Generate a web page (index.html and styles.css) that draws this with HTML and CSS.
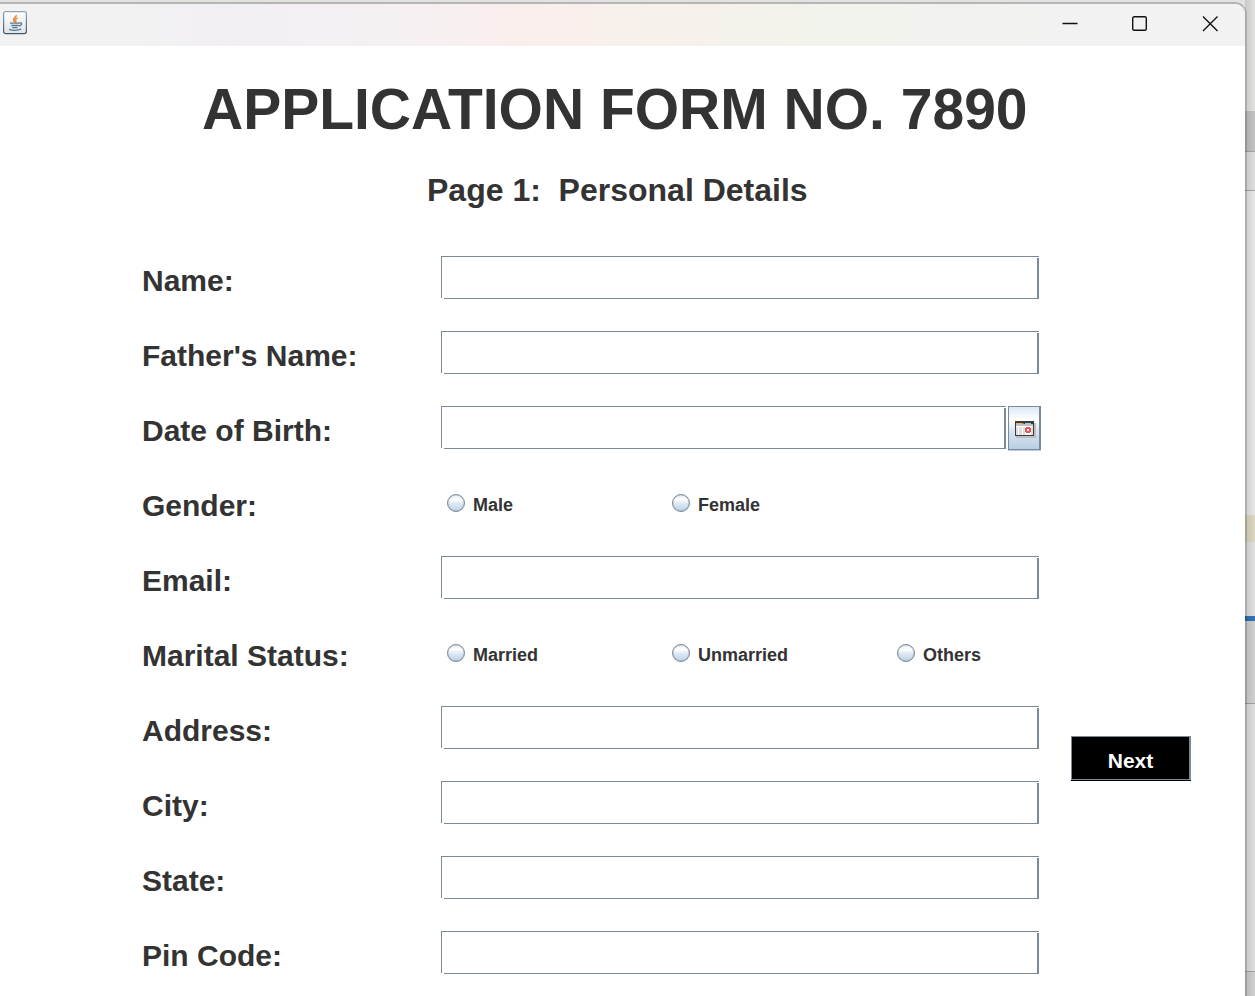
FILE: index.html
```html
<!DOCTYPE html>
<html lang="en">
<head>
<meta charset="utf-8">
<meta name="viewport" content="width=device-width, initial-scale=1">
<title>Application Form</title>
<link rel="stylesheet" href="styles.css">
</head>
<body>
<div class="desktop">
  <div class="window">
    <header class="titlebar">
      <svg class="app-icon" width="24" height="24" viewBox="0 0 24 24" aria-hidden="true">
        <defs><linearGradient id="tile" x1="0" y1="0" x2="0" y2="1"><stop offset="0" stop-color="#fff"/><stop offset="1" stop-color="#dfe3e6"/></linearGradient><linearGradient id="rim" x1="0" y1="0" x2="0" y2="1"><stop offset="0" stop-color="#8fa5b4"/><stop offset="1" stop-color="#3f5b70"/></linearGradient></defs>
        <rect x="0.6" y="0.6" width="22.8" height="22" rx="2" fill="url(#tile)" stroke="url(#rim)" stroke-width="1.2"/>
        <path d="M13.200 4c.6 2.400-3.400 3-2.600 5.200.2.700.9 1.200 1.200 2.200M14.600 7c-2.400.8-2.800 1.800-1.900 2.700.5.500.2 1.100-.4 1.600" fill="none" stroke="#ee8a32" stroke-width="1.500"/>
        <path d="M7 12.100h9.500M8.300 14.500h7.400M9.300 16.600h5.200M16.500 11.900c3.200-.4 2.700 2.400-.6 3.100M6 18.400c3.500 1 9 1 12.300-.2" fill="none" stroke="#58788f" stroke-width="1.300"/>
      </svg>
      <div class="window-controls">
        <button class="control" type="button" aria-label="Minimize"><svg width="16" height="16" viewBox="0 0 16 16"><path d="M0.500 7.500h15"/></svg></button>
        <button class="control" type="button" aria-label="Maximize"><svg width="16" height="16" viewBox="0 0 16 16"><rect x="0.700" y="0.700" width="13.600" height="13.600" rx="1.500"/></svg></button>
        <button class="control" type="button" aria-label="Close"><svg width="16" height="16" viewBox="0 0 16 16"><path d="M1 .5l14.500 14.500M15.500 .5L1 15"/></svg></button>
      </div>
    </header>
    <main class="content">
      <h1 class="title">APPLICATION FORM NO. 7890</h1>
      <h2 class="subtitle">Page 1:&nbsp; Personal Details</h2>
      <form class="form">
        <label class="label" for="name">Name:</label>
        <input class="field" id="name" type="text">
        <label class="label" for="father">Father's Name:</label>
        <input class="field" id="father" type="text">
        <label class="label" for="dob">Date of Birth:</label>
        <div class="date">
          <input class="field" id="dob" type="text">
          <button class="date-button" type="button" aria-label="Choose date">
            <svg width="21" height="17" viewBox="0 0 21 17" shape-rendering="crispEdges">
              <path d="M1 2h20v15H1z" fill="#bdbfc3"/>
              <path d="M0 0h19v15H0z" fill="#3c3c3e"/>
              <path d="M1 3h17v11H1z" fill="#fff"/>
              <path d="M1 3h17v2H1z" fill="#bfbfbf"/>
              <path d="M1 2h6v1H1z" fill="#f5b243"/><path d="M7 2h2v1H7z" fill="#8a7f72"/><path d="M10 2h6v1h-6z" fill="#9cc7ee"/>
              <path d="M1 6h2v8H1zM4 6h3v8H4zM8 6h2v8H8zM16 6h2v8h-2z" fill="#dedede"/>
              <path d="M11 6h4v1h1v4h-1v1h-4v-1h-1V7h1z" fill="#e25558"/><path d="M12 8h2v2h-2z" fill="#fff"/>
            </svg>
          </button>
        </div>
        <span class="label" id="gender-label">Gender:</span>
        <div class="options" role="radiogroup" aria-labelledby="gender-label">
          <label class="option"><input class="radio" type="radio" name="gender">Male</label>
          <label class="option"><input class="radio" type="radio" name="gender">Female</label>
        </div>
        <label class="label" for="email">Email:</label>
        <input class="field" id="email" type="text">
        <span class="label" id="marital-label">Marital Status:</span>
        <div class="options" role="radiogroup" aria-labelledby="marital-label">
          <label class="option"><input class="radio" type="radio" name="marital">Married</label>
          <label class="option"><input class="radio" type="radio" name="marital">Unmarried</label>
          <label class="option"><input class="radio" type="radio" name="marital">Others</label>
        </div>
        <label class="label" for="address">Address:</label>
        <input class="field" id="address" type="text">
        <label class="label" for="city">City:</label>
        <input class="field" id="city" type="text">
        <label class="label" for="state">State:</label>
        <input class="field" id="state" type="text">
        <label class="label" for="pin">Pin Code:</label>
        <input class="field" id="pin" type="text">
        <button class="next" type="button">Next</button>
      </form>
    </main>
  </div>
</div>
</body>
</html>
```
FILE: styles.css
```css
* {
  box-sizing: border-box;
}

body {
  margin: 0;
  background: #dcdcdc;
  color: #333;
  font-family: "Liberation Sans", Arial, sans-serif;
  font-weight: bold;
}

button,
input {
  margin: 0;
  font: inherit;
}

/* The strip of other windows showing behind the right edge */
.desktop {
  min-height: 100vh;
  padding: 2px 8px 0 0;
  background:
    linear-gradient(90deg, #0000001c, #0000) right / 10px 100% no-repeat,
    linear-gradient(#e2e2e1 111px, #c2c2c2 111px 151px, #a6a6a6 151px 152px, #dedede 152px 190px, #a6a6a6 190px 191px, #e6e6e6 191px 515px, #dbd7c1 515px 542px, #e0e0e0 542px 616px, #3474b5 616px 621px, #d0d0d0 621px 703px, #a3a3a3 703px 704px, #dedede 704px 971px, #a3a3a3 971px 972px, #cfcfcf 972px);
}

.window {
  display: flex;
  flex-direction: column;
  min-height: calc(100vh - 2px);
  border-top: 2px solid #00000033;
  border-right: 2px solid #00000028;
  border-top-right-radius: 12px;
  background: #fff;
  background-clip: padding-box;
  overflow: hidden;
}

.titlebar {
  display: flex;
  justify-content: space-between;
  height: 42px;
  padding-left: 3px;
  background: linear-gradient(90deg, #f2f2f2 10%, #f2eff3 18%, #f5f0f2 33%, #faeeed 41%, #f6f1ea 54%, #f1f3ec 68%, #f2f2f2 86%);
}

.app-icon {
  margin-top: 7px;
}

.window-controls {
  display: flex;
}

.control {
  display: grid;
  place-items: center;
  width: 70px;
  height: 40px;
  padding: 0;
  border: 0;
  background: none;
}

.control svg {
  fill: none;
  stroke: #111;
  stroke-width: 1.4;
}

.content {
  flex: 1;
  padding: 31px 54px 16px 142px;
}

.title {
  margin: 0 0 29px;
  padding-left: 60px;
  font-size: 57px;
  line-height: 64px;
}

.subtitle {
  margin: 0 0 46px;
  padding-left: 285px;
  font-size: 32px;
  line-height: 40px;
}

.form {
  display: grid;
  grid-template-columns: 299px minmax(0, 1fr) 120px;
  grid-auto-rows: 48px;
  row-gap: 27px;
}

.label {
  grid-column: 1;
  font-size: 30px;
  line-height: 50px;
}

.field {
  grid-column: 2;
  width: calc(100% - 32px);
  min-width: 0;
  height: 43px;
  padding: 0 8px;
  border: 0;
  font-size: 21px;
  background:
    linear-gradient(#7a8a99, #7a8a99) 0 0 / 100% 1px no-repeat,
    linear-gradient(#7a8a99, #7a8a99) 0 0 / 1px calc(100% - 1px) no-repeat,
    linear-gradient(#7a8a99, #7a8a99) 3px 100% / 100% 1px no-repeat,
    linear-gradient(#7a8a99, #7a8a99) 100% 2px / 2px 100% no-repeat,
    #fff;
}

.date {
  grid-column: 2;
  display: flex;
  gap: 2px;
  margin-right: 30px;
}

.date .field {
  flex: 1;
  width: auto;
}

.date-button {
  display: grid;
  place-items: center;
  width: 33px;
  height: 44px;
  padding: 3px 0 0 3px;
  border: 1px solid #7a8a99;
  border-right-width: 2px;
  box-shadow: 0 1px #b8cfe5;
  background: linear-gradient(#dde8f3, #fff 30%, #dce7f2 55%, #b8cfe5);
}

.options {
  grid-column: 2;
  display: grid;
  grid-template-columns: repeat(3, 225px);
  padding-left: 6px;
}

.option {
  display: flex;
  align-items: center;
  gap: 8px;
  font-size: 18px;
}

.radio {
  appearance: none;
  width: 18px;
  height: 18px;
  margin-bottom: 4px;
  border: 1px solid #7a8a99;
  border-radius: 50%;
  background: linear-gradient(#dde8f3, #fff 30%, #dce7f2 55%, #b8cfe5) border-box;
  box-shadow: inset 0 0 1px #7a8a99;
}

.radio:checked {
  background: radial-gradient(#333 35%, #fff 40%);
}

.next {
  grid-column: 3;
  grid-row: 7 / span 2;
  height: 44px;
  margin-top: 30px;
  padding: 6px 0 0;
  border: 1px solid #7a8a99;
  border-right-width: 2px;
  box-shadow: 0 1px #000;
  background: #000;
  color: #fff;
  font-size: 21px;
}
```
